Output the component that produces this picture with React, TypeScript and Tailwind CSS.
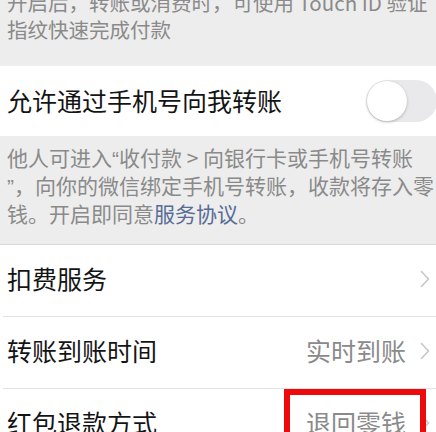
import React from "react";

const font = { fontFamily: '"Noto Sans CJK SC", "Noto Sans", sans-serif' };
const latin = { fontFamily: '"Liberation Sans", sans-serif' };

function Chevron() {
  return (
    <svg width="10" height="18" viewBox="0 0 10 18" className="shrink-0">
      <path d="M1.5 1.5 L8.5 9 L1.5 16.5" fill="none" stroke="#c7c7cc" strokeWidth="1.6" strokeLinecap="round" strokeLinejoin="round" />
    </svg>
  );
}

function Row({ label, value, last }: { label: string; value?: string; last?: boolean }) {
  return (
    <div className="relative">
      <div className="flex h-[71px] items-center pb-[4px] pl-[7px] pr-[6px]">
        <span className="flex-1 text-[25px] leading-none text-[#141414] whitespace-nowrap">{label}</span>
        {value && <span className="mr-[14px] text-[25px] leading-none text-[#8a8a8a] whitespace-nowrap">{value}</span>}
        <Chevron />
      </div>
      {!last && <div className="ml-[3px] h-px bg-[#e3e3e3]" />}
    </div>
  );
}

export default function App() {
  return (
    <div className="relative h-[432px] w-[436px] overflow-hidden bg-[#ededed]" style={font}>
      <div className="flex h-[66px] flex-col pl-[7px]">
        <p className="mt-[-11px] text-[20.5px] leading-[27px] text-[#8a8a8a] whitespace-nowrap">
          <span className="block">开启后，转账或消费时，可使用 Touch ID 验证</span>
          <span className="block">指纹快速完成付款</span>
        </p>
      </div>

      <div className="flex h-[70px] items-center bg-white pl-[7px]">
        <span className="flex-1 pb-[1px] text-[25px] leading-none text-[#141414] whitespace-nowrap">允许通过手机号向我转账</span>
        <div className="relative mr-[-1px] h-[42px] w-[71px] rounded-full bg-[#e9e9eb]">
          <div className="absolute left-[1px] top-[1px] h-[40px] w-[40px] rounded-full bg-white shadow-[0_1px_3px_rgba(0,0,0,0.25)]" />
        </div>
      </div>

      <div className="h-[108px] pl-[7px] pt-[8px]">
        <p className="text-[21px] leading-[27px] text-[#8a8a8a] whitespace-nowrap">
          <span className="block">
            他人可进入<span style={latin}>“</span>收付款 &gt; 向银行卡或手机号转账
          </span>
          <span className="block">
            <span style={latin}>”</span>，向你的微信绑定手机号转账，收款将存入零
          </span>
          <span className="block">
            钱。开启即同意<span className="text-[#576b95]">服务协议</span>。
          </span>
        </p>
      </div>

      <div className="border-t border-[#d9d9d9] bg-white">
        <Row label="扣费服务" />
        <Row label="转账到账时间" value="实时到账" />
        <Row label="红包退款方式" value="退回零钱" last />
      </div>

      <div className="pointer-events-none absolute left-[284px] top-[389px] h-[60px] w-[142px] border-[6px] border-[#ee0a0a]" />
    </div>
  );
}
